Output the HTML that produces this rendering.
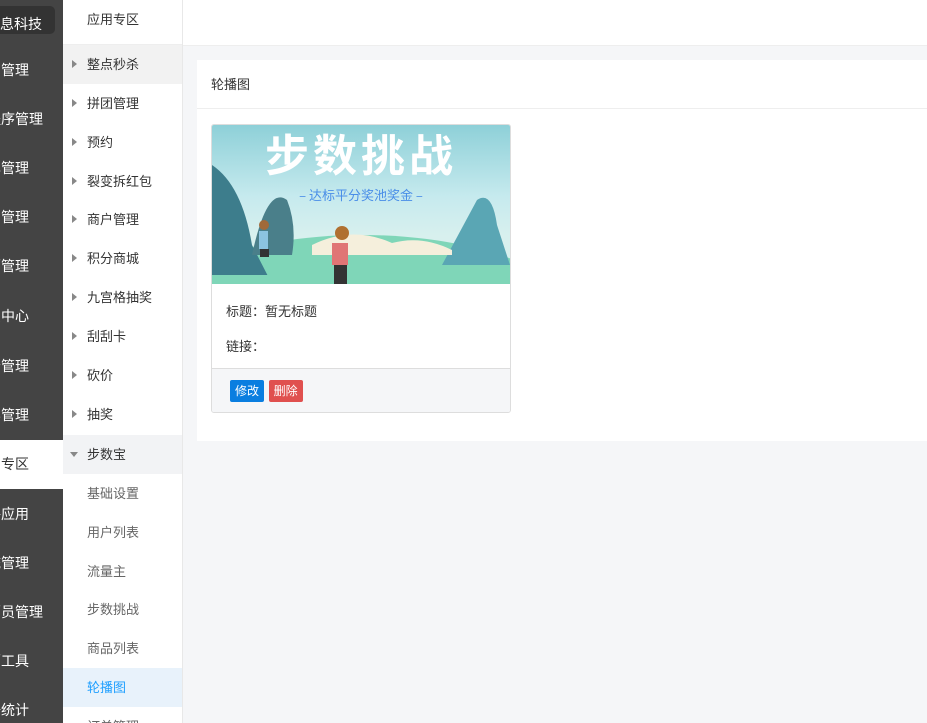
<!DOCTYPE html>
<html><head><meta charset="utf-8"><style>
*{margin:0;padding:0;box-sizing:border-box}
html,body{width:927px;height:723px;overflow:hidden}
body{background:#f5f6f8;font-family:"Liberation Sans","Noto Sans CJK SC",sans-serif;font-size:13px;color:#333;position:relative}
.s1{position:absolute;left:0;top:0;width:63px;height:723px;background:#444;overflow:hidden}
.s1 div{position:absolute;left:0;width:63px;height:20px;color:#fff;font-size:14px;line-height:20px;white-space:nowrap}
.s1 div span{position:absolute;right:34px;top:0}
.s1 .w span{right:20px}
.s1 .logo{top:6px;width:55px;height:28px;background:#333;border-radius:0 5px 5px 0;line-height:28px}
.s1 .logo span{right:13px;top:4px}
.s1 .act{background:#fff;color:#333;height:49px}
.s1 .act span{top:14px}
.s2{position:absolute;left:63px;top:0;width:120px;height:723px;background:#fff;border-right:1px solid #e8e8e8;overflow:hidden}
.s2 div{position:absolute;left:0;width:119px;height:39px;line-height:39px;padding-left:24px;color:#333;font-size:13px}
.s2 .tri:before{content:"";position:absolute;left:9px;top:15px;border-left:5px solid #888;border-top:4px solid transparent;border-bottom:4px solid transparent}
.s2 .down:before{left:7px;top:17px;border-top:5px solid #888;border-left:4px solid transparent;border-right:4px solid transparent;border-bottom:0}
.s2 .sub{color:#666}
.top{position:absolute;left:183px;top:0;width:744px;height:46px;background:#fff;border-bottom:1px solid #eee}
.panel{position:absolute;left:197px;top:60px;width:730px;height:381px;background:#fff}
.ph{height:49px;line-height:49px;padding-left:14px;border-bottom:1px solid #eee;color:#333}
.card{position:absolute;left:14px;top:64px;width:300px;height:289px;border:1px solid #ddd;border-radius:3px;overflow:hidden}
.img{position:relative;height:159px;background:linear-gradient(180deg,#8ed0d8 0%,#c6eaee 45%,#d8f0ee 70%)}
.body{padding:10px 14px;height:84px;line-height:35px;color:#333;font-size:13px}
.foot{border-top:1px solid #ddd;background:#f5f6f8;height:44px;padding:11px 18px}
.btn{display:inline-block;height:22px;line-height:22px;padding:0 5px;color:#fff;font-size:12px;border-radius:2px;margin-right:1px}
</style></head><body>
<div class="s1">
<div class="logo w"><span>信息科技</span></div>
<div style="top:60px"><span>用户管理</span></div>
<div class="w" style="top:109px"><span>小程序管理</span></div>
<div style="top:158px"><span>订单管理</span></div>
<div style="top:207px"><span>商品管理</span></div>
<div style="top:256px"><span>营销管理</span></div>
<div style="top:306px"><span>会员中心</span></div>
<div style="top:356px"><span>财务管理</span></div>
<div style="top:405px"><span>内容管理</span></div>
<div class="act" style="top:440px"><span>应用专区</span></div>
<div style="top:504px"><span>插件应用</span></div>
<div style="top:553px"><span>系统管理</span></div>
<div class="w" style="top:602px"><span>分销员管理</span></div>
<div style="top:651px"><span>营销工具</span></div>
<div style="top:700px"><span>数据统计</span></div>
</div>
<div class="s2">
<div style="top:0;height:45px;line-height:40px;border-bottom:1px solid #eee">应用专区</div>
<div class="tri" style="top:45px;background:#f2f2f2">整点秒杀</div>
<div class="tri" style="top:84px">拼团管理</div>
<div class="tri" style="top:123px">预约</div>
<div class="tri" style="top:162px">裂变拆红包</div>
<div class="tri" style="top:200px">商户管理</div>
<div class="tri" style="top:239px">积分商城</div>
<div class="tri" style="top:278px">九宫格抽奖</div>
<div class="tri" style="top:317px">刮刮卡</div>
<div class="tri" style="top:356px">砍价</div>
<div class="tri" style="top:395px">抽奖</div>
<div class="tri down" style="top:435px;background:#f2f3f5">步数宝</div>
<div class="sub" style="top:474px">基础设置</div>
<div class="sub" style="top:513px">用户列表</div>
<div class="sub" style="top:552px">流量主</div>
<div class="sub" style="top:590px">步数挑战</div>
<div class="sub" style="top:629px">商品列表</div>
<div class="sub" style="top:668px;background:#e8f2fb;color:#1e9fff">轮播图</div>
<div class="sub" style="top:707px">订单管理</div>
</div>
<div class="top"></div>
<div class="panel">
<div class="ph">轮播图</div>
<div class="card">
<div class="img">
<svg width="298" height="159" style="position:absolute;left:0;top:0">
<ellipse cx="150" cy="200" rx="220" ry="90" fill="#7fd6b8"/>
<path d="M0 40 Q30 60 40 120 L60 159 L0 159Z" fill="#3d7d8c"/>
<path d="M40 130 Q55 60 75 75 Q85 100 80 130Z" fill="#4a7f8a"/>
<path d="M230 140 L265 75 Q280 65 285 100 L298 140Z" fill="#5aa6b4"/>
<path d="M100 120 Q140 100 180 118 Q210 110 240 125 L240 130 L100 130Z" fill="#f5efdc"/>
<rect x="0" y="150" width="298" height="9" fill="#7fd6b8"/>
<circle cx="52" cy="100" r="5" fill="#a06a3a"/><rect x="47" y="106" width="9" height="18" fill="#8cc4e0"/><rect x="48" y="124" width="9" height="8" fill="#333"/>
<circle cx="130" cy="108" r="7" fill="#b07030"/><rect x="120" y="118" width="16" height="22" fill="#e07575"/><rect x="122" y="140" width="13" height="19" fill="#333"/>
<text x="149" y="46" text-anchor="middle" font-size="44" font-weight="bold" fill="#fff" font-family="Noto Sans CJK SC,sans-serif" letter-spacing="4">步数挑战</text>
<text x="149" y="75" text-anchor="middle" font-size="13" fill="#4a8ee8" font-family="Noto Sans CJK SC,sans-serif">– 达标平分奖池奖金 –</text>
</svg>
</div>
<div class="body">标题：暂无标题<br>链接：</div>
<div class="foot"><span class="btn" style="background:#0a7ee0">修改</span> <span class="btn" style="background:#e0504f">删除</span></div>
</div>
</div>
</body></html>
